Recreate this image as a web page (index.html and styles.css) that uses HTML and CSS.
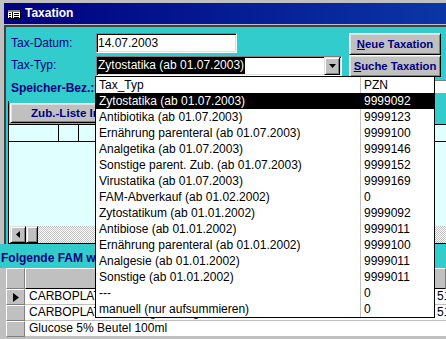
FILE: index.html
```html
<!DOCTYPE html>
<html lang="de">
<head>
<meta charset="utf-8">
<title>Taxation</title>
<link rel="stylesheet" href="styles.css">
</head>
<body>
<div class="win">
  <div class="titlebar">
    <svg class="ticon" width="14" height="10" viewBox="0 0 14 10">
      <rect x="0.5" y="0.5" width="13" height="9" fill="#fff" stroke="#000"/>
      <rect x="1" y="1" width="12" height="2" fill="#808080"/>
      <line x1="5.5" y1="3" x2="5.5" y2="9.5" stroke="#000"/>
      <rect x="2" y="4" width="2" height="1" fill="#000"/>
      <rect x="2" y="6" width="2" height="1" fill="#000"/>
      <rect x="2" y="8" width="2" height="1" fill="#000"/>
      <rect x="7" y="4" width="5" height="1" fill="#000"/>
      <rect x="7" y="6" width="5" height="1" fill="#000"/>
      <rect x="7" y="8" width="5" height="1" fill="#000"/>
    </svg>
    <span class="ttext">Taxation</span>
  </div>
  <div class="form">
    <div class="top">
      <div class="lbl">Tax-Datum:</div>
      <div class="field date">14.07.2003</div>
      <div></div>
      <div class="btn"><span><u>N</u>eue Taxation</span></div>
      <div></div>

      <div class="lbl">Tax-Typ:</div>
      <div class="combo">
        <span class="seltext">Zytostatika (ab 01.07.2003)</span>
        <span class="dropbtn"><svg width="7" height="4" viewBox="0 0 7 4"><polygon points="0,0 7,0 3.5,4" fill="#000"/></svg></span>
      </div>
      <div></div>
      <div class="btn"><span><u>S</u>uche Taxation</span></div>
      <div></div>

      <div class="lbl bold">Speicher-Bez.:</div>
      <div class="speicher"></div>
    </div>

    <div class="subform">
      <div class="subhead">
        <div class="tabbtn">Zub.-Liste Infusionen</div>
      </div>
      <div class="dshead">
        <div class="dc a"></div>
        <div class="dc b"></div>
        <div class="dc c"></div>
      </div>
      <div class="dsbody"></div>
      <div class="hscroll">
        <div class="sbtn"><svg width="4" height="7" viewBox="0 0 4 7"><polygon points="4,0 4,7 0,3.5" fill="#000"/></svg></div>
        <div class="thumb"></div>
        <div class="track"></div>
      </div>
    </div>
  </div>
</div>

<div class="band">Folgende FAM wurden taxiert:</div>

<div class="sheet">
  <div class="srow head">
    <div class="gut"></div>
    <div class="rsel"></div>
    <div class="hcell name"></div>
    <div class="hcell val"></div>
  </div>
  <div class="srow">
    <div class="gut"></div>
    <div class="rsel"><svg width="6" height="9" viewBox="0 0 6 9"><polygon points="0,0 6,4.5 0,9" fill="#000"/></svg></div>
    <div class="scell name">CARBOPLATIN 450 mg Inf.-Lsg.</div>
    <div class="scell val">51</div>
  </div>
  <div class="srow">
    <div class="gut"></div>
    <div class="rsel"></div>
    <div class="scell name">CARBOPLATIN 150 mg Inf.-Lsg.</div>
    <div class="scell val">51</div>
  </div>
  <div class="srow">
    <div class="gut"></div>
    <div class="rsel"></div>
    <div class="scell name">Glucose 5% Beutel 100ml</div>
    <div class="scell val"></div>
  </div>
</div>

<div class="dropdown">
  <div class="drow">
    <div class="d1">Tax_Typ</div><div class="d2">PZN</div>
  </div>
  <div class="drow selected">
    <div class="d1">Zytostatika (ab 01.07.2003)</div><div class="d2">9999092</div>
  </div>
  <div class="drow"><div class="d1">Antibiotika (ab 01.07.2003)</div><div class="d2">9999123</div></div>
  <div class="drow"><div class="d1">Ernährung parenteral (ab 01.07.2003)</div><div class="d2">9999100</div></div>
  <div class="drow"><div class="d1">Analgetika (ab 01.07.2003)</div><div class="d2">9999146</div></div>
  <div class="drow"><div class="d1">Sonstige parent. Zub. (ab 01.07.2003)</div><div class="d2">9999152</div></div>
  <div class="drow"><div class="d1">Virustatika (ab 01.07.2003)</div><div class="d2">9999169</div></div>
  <div class="drow"><div class="d1">FAM-Abverkauf (ab 01.02.2002)</div><div class="d2">0</div></div>
  <div class="drow"><div class="d1">Zytostatikum (ab 01.01.2002)</div><div class="d2">9999092</div></div>
  <div class="drow"><div class="d1">Antibiose (ab 01.01.2002)</div><div class="d2">9999011</div></div>
  <div class="drow"><div class="d1">Ernährung parenteral (ab 01.01.2002)</div><div class="d2">9999100</div></div>
  <div class="drow"><div class="d1">Analgesie (ab 01.01.2002)</div><div class="d2">9999011</div></div>
  <div class="drow"><div class="d1">Sonstige (ab 01.01.2002)</div><div class="d2">9999011</div></div>
  <div class="drow"><div class="d1">---</div><div class="d2">0</div></div>
  <div class="drow"><div class="d1">manuell (nur aufsummieren)</div><div class="d2">0</div></div>
</div>
</body>
</html>
```

FILE: styles.css
```css
html, body {
  margin: 0;
  padding: 0;
}
body {
  width: 446px;
  height: 339px;
  overflow: hidden;
  position: relative;
  background: #c0c0c0;
  font-family: "Liberation Sans", Arial, sans-serif;
  font-size: 12px;
  color: #000;
}

/* window frame */
.win {
  background: #c0c0c0;
  padding: 3px 0 0 4px;
  height: 244px;
  box-sizing: border-box;
}
.titlebar {
  height: 21px;
  margin-bottom: 1px;
  display: flex;
  align-items: center;
  background: linear-gradient(to right, #000080 0%, #0a36a6 100%);
  color: #fff;
  font-weight: bold;
  font-size: 12px;
}
.ticon {
  margin-left: 3px;
  margin-right: 4px;
  margin-top: 1px;
}
.ttext {
  line-height: 21px;
}

.form {
  border-top: 2px solid #404040;
  border-left: 2px solid #404040;
  background: #33cccc;
  height: 217px;
  overflow: hidden;
}

/* top controls */
.top {
  display: grid;
  grid-template-columns: 85px 246px 7px 92px 1fr;
  grid-template-rows: 22px 22px 24px;
  padding: 6px 0 0 5px;
}
.lbl {
  color: #000080;
  line-height: 16px;
  padding-top: 2px;
  white-space: nowrap;
}
.lbl.bold {
  font-weight: bold;
  padding-top: 3px;
}
.field {
  box-sizing: border-box;
  background: #fff;
  border: 1px solid;
  border-color: #808080 #fff #fff #808080;
  box-shadow: inset 1px 1px #000, inset -1px -1px #dfdfdf;
}
.date {
  width: 141px;
  height: 20px;
  line-height: 18px;
  padding-left: 1px;
}
.combo {
  box-sizing: border-box;
  width: 246px;
  height: 20px;
  margin-top: 1px;
  background: #fff;
  border: 1px solid;
  border-color: #808080 #fff #fff #808080;
  box-shadow: inset 1px 1px #000, inset -1px -1px #dfdfdf;
  display: flex;
  align-items: flex-start;
}
.seltext {
  background: #000;
  color: #fff;
  height: 17px;
  line-height: 17px;
  padding: 0 1px;
  white-space: nowrap;
}
.dropbtn {
  margin-left: auto;
  margin-right: 1px;
  box-sizing: border-box;
  width: 16px;
  height: 18px;
  background: #c0c0c0;
  border: 1px solid;
  border-color: #dfdfdf #000 #000 #dfdfdf;
  box-shadow: inset 1px 1px #fff, inset -1px -1px #808080;
  display: flex;
  align-items: center;
  justify-content: center;
}
.btn {
  box-sizing: border-box;
  height: 22px;
  background: #c0c0c0;
  border: 1px solid;
  border-color: #fff #000 #000 #fff;
  box-shadow: inset 1px 1px #dfdfdf, inset -1px -1px #808080;
  color: #000080;
  font-weight: bold;
  font-size: 11.3px;
  display: flex;
  align-items: center;
  justify-content: center;
  white-space: nowrap;
}
.speicher {
  grid-column: 2 / -1;
  margin-top: 3px;
  height: 13px;
  box-sizing: border-box;
  background: #fff;
  border-top: 1px solid #808080;
}

/* subform */
.subform {
  margin-left: 2px;
  border-left: 1px solid #000;
  border-bottom: 1px solid #000;
}
.subhead {
  height: 23px;
  box-sizing: border-box;
  padding: 2px 0 0 1px;
  background: #33cccc;
}
.tabbtn {
  box-sizing: border-box;
  width: 170px;
  height: 20px;
  padding-left: 20px;
  background: #c0c0c0;
  border: 1px solid;
  border-color: #fff #000 #000 #fff;
  box-shadow: inset 1px 1px #dfdfdf, inset -1px -1px #808080;
  color: #000080;
  font-weight: bold;
  font-size: 11.6px;
  line-height: 18px;
  white-space: nowrap;
}
.dshead {
  display: flex;
  height: 16px;
  border-top: 1px solid #000;
  border-bottom: 1px solid #000;
  background: #e0ffff;
}
.dc.a {
  width: 49px;
  border-right: 1px solid #000;
}
.dc.b {
  width: 19px;
  border-right: 1px solid #000;
}
.dc.c {
  flex: 1;
}
.dsbody {
  height: 84px;
  background: #e0ffff;
}
.hscroll {
  display: flex;
  height: 17px;
  background: #e0ffff;
}
.sbtn, .thumb {
  box-sizing: border-box;
  height: 17px;
  background: #c0c0c0;
  border: 1px solid;
  border-color: #dfdfdf #000 #000 #dfdfdf;
  box-shadow: inset 1px 1px #fff, inset -1px -1px #808080;
}
.sbtn {
  width: 16px;
  margin-left: 1px;
  display: flex;
  align-items: center;
  justify-content: center;
}
.thumb {
  width: 12px;
}
.track {
  flex: 1;
  background-color: #c0c0c0;
  background-image: conic-gradient(#fff 0 25%, #c0c0c0 0 50%, #fff 0 75%, #c0c0c0 0);
  background-size: 2px 2px;
}

/* band */
.band {
  height: 24px;
  box-sizing: border-box;
  padding: 6px 0 0 1px;
  line-height: 16px;
  background: #33cccc;
  color: #000080;
  font-weight: bold;
  white-space: nowrap;
}

/* datasheet */
.sheet {
  background: #c0c0c0;
}
.srow {
  display: flex;
  height: 16px;
}
.srow.head {
  height: 21px;
}
.gut {
  width: 6px;
  background: #c0c0c0;
}
.rsel {
  box-sizing: border-box;
  width: 19px;
  background: #c0c0c0;
  border: 1px solid;
  border-color: #fff #808080 #808080 #fff;
  display: flex;
  align-items: center;
  justify-content: center;
}
.hcell {
  box-sizing: border-box;
  background: #c0c0c0;
  border: 1px solid;
  border-color: #fff #808080 #000 #fff;
}
.scell {
  box-sizing: border-box;
  background: #fff;
  border-bottom: 1px solid #c0c0c0;
  line-height: 15px;
  padding-left: 4px;
  white-space: nowrap;
  overflow: hidden;
}
.name {
  width: 409px;
}
.val {
  flex: 1;
  padding-left: 3px;
}

/* dropdown list */
.dropdown {
  position: absolute;
  left: 95px;
  top: 76px;
  width: 340px;
  height: 242px;
  box-sizing: border-box;
  border: 1px solid #000;
  background: #fff;
}
.drow {
  display: flex;
  height: 16px;
  line-height: 16px;
  white-space: nowrap;
}
.d1 {
  width: 264px;
  box-sizing: border-box;
  padding-left: 3px;
  overflow: hidden;
}
.d2 {
  flex: 1;
  border-left: 1px solid #c0c0c0;
  padding-left: 3px;
}
.drow.selected {
  background: #000;
  color: #fff;
}
.drow.selected .d2 {
  border-left-color: #000;
}
```
